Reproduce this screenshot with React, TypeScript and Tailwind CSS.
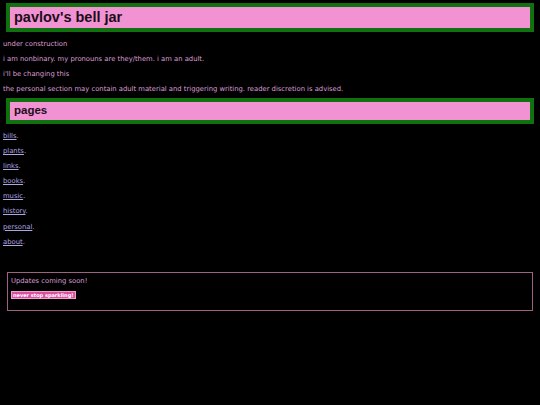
export default function App() {
  const pages = ['bills', 'plants', 'links', 'books', 'music', 'history', 'personal', 'about']

  return (
    <div className="min-h-[405px] bg-black px-[3px] pt-[3px] pb-6 font-['DejaVu_Sans',Verdana,sans-serif] text-[#dc9fd6]">
      <header className="mx-[3px] h-[29px] border-[4px] border-[#0f720f] bg-[#f192d2] pl-[4px] flex items-center">
        <h1 className="font-['Liberation_Sans',Arial,sans-serif] text-[14.5px] font-bold text-[#1c0d1a]">pavlov's bell jar</h1>
      </header>

      <div className="mt-[5px] text-[6.8px] leading-[15px]">
        <p>under construction</p>
        <p>i am nonbinary. my pronouns are they/them. i am an adult.</p>
        <p>i'll be changing this</p>
        <p>the personal section may contain adult material and triggering writing. reader discretion is advised.</p>
      </div>

      <section className="mt-[1px] mx-[3px] h-[26px] border-[4px] border-[#0f720f] bg-[#f192d2] pl-[4px] flex items-center">
        <h2 className="font-['Liberation_Sans',Arial,sans-serif] text-[11.5px] font-bold text-[#1c0d1a]">pages</h2>
      </section>

      <ul className="mt-[5px] text-[6.8px] leading-[15.1px]">
        {pages.map(p => (
          <li key={p}>
            <a href="#" className="text-[#aea6e0] underline">{p}</a>.
          </li>
        ))}
      </ul>

      <div className="mt-[22px] mx-[4px] h-[39px] border border-[#a0607f] pl-[3px] pt-[3px]">
        <p className="text-[6.8px] leading-[10px]">Updates coming soon!</p>
        <span className="mt-[5px] block w-fit bg-[#d9509f] border border-[#f2a0d0] px-[1px] text-[5px] leading-[6px] font-bold text-white">never stop sparkling!</span>
      </div>
    </div>
  )
}
